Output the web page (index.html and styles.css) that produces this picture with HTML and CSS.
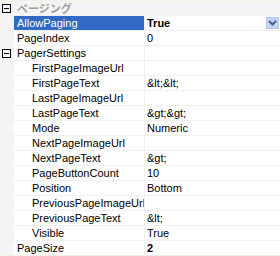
FILE: index.html
```html
<!DOCTYPE html>
<html lang="ja">
<head>
    <meta charset="UTF-8">
    <title>PropertyGrid</title>
    <link rel="stylesheet" href="styles.css">
</head>
<body>
    <div class="grid">
        <div class="row cat">
            <span class="gutter"><svg class="toggle" width="9" height="9" viewBox="0 0 9 9"><rect x="0.5" y="0.5" width="8" height="8" fill="none" stroke="#000"/><path d="M2 4.5h5" stroke="#000"/></svg></span>
            <span class="name">ページング</span>
        </div>
        <div class="row selected">
            <span class="gutter"></span>
            <span class="name">AllowPaging</span>
            <span class="value bold">True
                <span class="drop"><svg width="9" height="6" viewBox="0 0 9 6"><path d="M1 1l3.5 3.5L8 1" fill="none" stroke="#4d6185" stroke-width="2"/></svg></span>
            </span>
        </div>
        <div class="row"><span class="gutter"></span><span class="name">PageIndex</span><span class="value">0</span></div>
        <div class="row">
            <span class="gutter"><svg class="toggle" width="9" height="9" viewBox="0 0 9 9"><rect x="0.5" y="0.5" width="8" height="8" fill="none" stroke="#000"/><path d="M2 4.5h5" stroke="#000"/></svg></span>
            <span class="name">PagerSettings</span><span class="value"></span>
        </div>
        <div class="row"><span class="gutter"></span><span class="name sub">FirstPageImageUrl</span><span class="value"></span></div>
        <div class="row"><span class="gutter"></span><span class="name sub">FirstPageText</span><span class="value">&amp;lt;&amp;lt;</span></div>
        <div class="row"><span class="gutter"></span><span class="name sub">LastPageImageUrl</span><span class="value"></span></div>
        <div class="row"><span class="gutter"></span><span class="name sub">LastPageText</span><span class="value">&amp;gt;&amp;gt;</span></div>
        <div class="row"><span class="gutter"></span><span class="name sub">Mode</span><span class="value">Numeric</span></div>
        <div class="row"><span class="gutter"></span><span class="name sub">NextPageImageUrl</span><span class="value"></span></div>
        <div class="row"><span class="gutter"></span><span class="name sub">NextPageText</span><span class="value">&amp;gt;</span></div>
        <div class="row"><span class="gutter"></span><span class="name sub">PageButtonCount</span><span class="value">10</span></div>
        <div class="row"><span class="gutter"></span><span class="name sub">Position</span><span class="value">Bottom</span></div>
        <div class="row"><span class="gutter"></span><span class="name sub">PreviousPageImageUrl</span><span class="value"></span></div>
        <div class="row"><span class="gutter"></span><span class="name sub">PreviousPageText</span><span class="value">&amp;lt;</span></div>
        <div class="row"><span class="gutter"></span><span class="name sub">Visible</span><span class="value">True</span></div>
        <div class="row last"><span class="gutter"></span><span class="name">PageSize</span><span class="value bold">2</span></div>
    </div>
</body>
</html>
```
FILE: styles.css
```css
body {
    margin: 0;
    background-color: #fff;
    font-family: "Liberation Sans", "Noto Sans CJK JP", sans-serif;
    font-size: 11px;
    color: #000;
}

.grid {
    width: 280px;
    height: 256px;
    border-top: 1px solid #f1efe2;
    box-sizing: border-box;
    overflow: hidden;
}

.row {
    display: flex;
    height: 14px;
    line-height: 14px;
    border-bottom: 1px solid #f0f0f0;
}

.row.last {
    border-bottom-color: #f1efe2;
}

.gutter {
    flex: 0 0 14px;
    background-color: #f4f4f4;
    display: flex;
    align-items: center;
    padding-left: 2px;
    box-sizing: border-box;
}

.toggle {
    display: block;
}

.name {
    flex: 0 0 131px;
    padding-left: 3px;
    box-sizing: border-box;
    border-right: 1px solid #f0f0f0;
    white-space: nowrap;
    overflow: hidden;
}

.name.sub {
    padding-left: 18px;
}

.value {
    flex: 1;
    display: flex;
    justify-content: space-between;
    align-items: center;
    padding-left: 2px;
    white-space: nowrap;
}

.bold {
    font-weight: bold;
}

.cat {
    background-color: #f4f4f4;
}

.cat .name {
    flex: 1;
    border-right: none;
    color: #a0a0a0;
    font-weight: bold;
    font-family: "Noto Sans CJK JP", sans-serif;
}

.selected .name {
    background-color: #316ac5;
    color: #fff;
}

.drop {
    width: 13px;
    height: 12px;
    margin-right: 1px;
    box-sizing: border-box;
    background-color: #c3d4fb;
    border: 1px solid #b4c8f6;
    display: flex;
    align-items: center;
    justify-content: center;
}

.drop svg {
    display: block;
}
```
